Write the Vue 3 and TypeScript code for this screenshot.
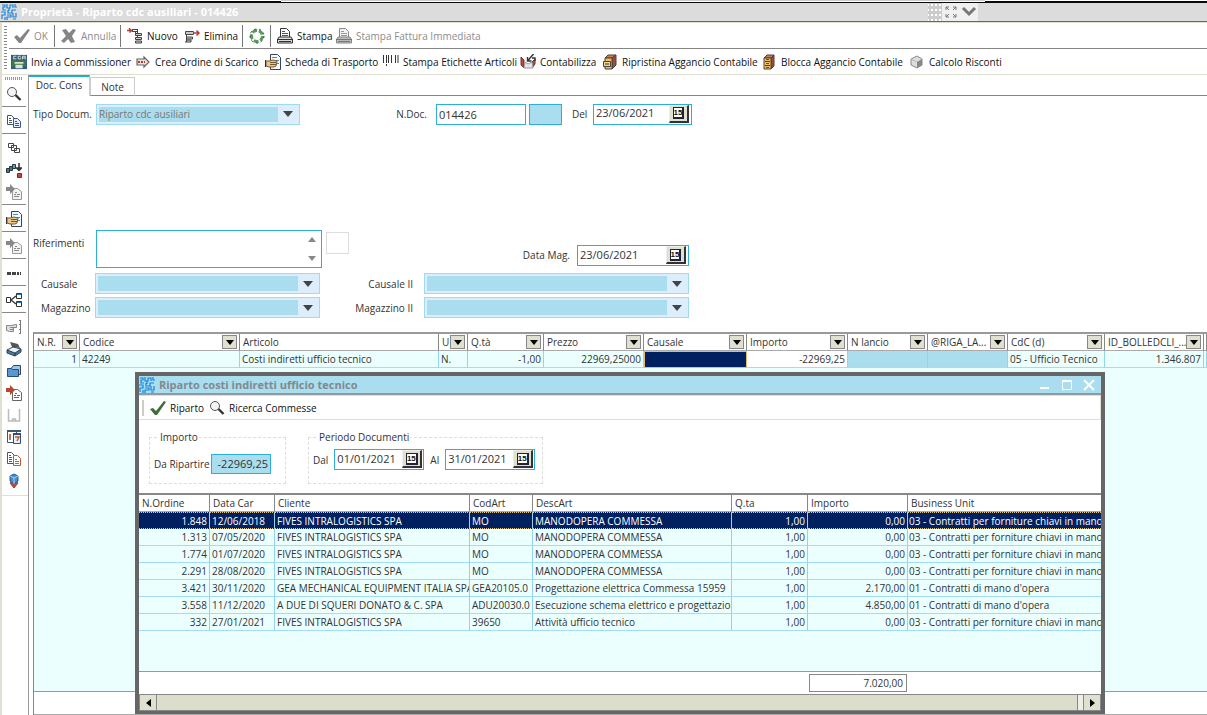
<script setup lang="ts">
import { ref } from 'vue'

interface Tool { icon: string; label: string; off?: boolean; sep?: boolean }

const fileTools: Tool[] = [
  { icon: 'check-off', label: 'OK', off: true },
  { icon: 'cross', label: 'Annulla', off: true, sep: true },
  { icon: 'new', label: 'Nuovo', sep: true },
  { icon: 'delete', label: 'Elimina' },
  { icon: 'recycle', label: '', sep: true },
  { icon: 'print', label: 'Stampa', sep: true },
  { icon: 'print-off', label: 'Stampa Fattura Immediata', off: true },
]

const docTools: Tool[] = [
  { icon: 'cga', label: 'Invia a Commissioner' },
  { icon: 'arrow', label: 'Crea Ordine di Scarico' },
  { icon: 'sheet-hand', label: 'Scheda di Trasporto' },
  { icon: 'barcode', label: 'Stampa Etichette Articoli' },
  { icon: 'book', label: 'Contabilizza' },
  { icon: 'cabinet', label: 'Ripristina Aggancio Contabile' },
  { icon: 'cabinet2', label: 'Blocca Aggancio Contabile' },
  { icon: 'cube', label: 'Calcolo Risconti' },
]

const rail: { icon: string; label: string; sep?: boolean }[] = [
  { icon: 'search', label: 'Cerca', sep: true },
  { icon: 'copy', label: 'Copia', sep: true },
  { icon: 'stack', label: 'Righe' },
  { icon: 'stack-down', label: 'Esplodi' },
  { icon: 'import-off', label: 'Importa', sep: true },
  { icon: 'sheet-hand', label: 'Scheda', sep: true },
  { icon: 'import-off', label: 'Importa righe', sep: true },
  { icon: 'dots', label: 'Altro', sep: true },
  { icon: 'tree', label: 'Struttura', sep: true },
  { icon: 'hand', label: 'Seleziona' },
  { icon: 'scanner', label: 'Scanner' },
  { icon: 'folder', label: 'Cartella' },
  { icon: 'import', label: 'Importa documento' },
  { icon: 'blank', label: 'Vuoto' },
  { icon: 'help', label: 'Guida' },
  { icon: 'copy-red', label: 'Duplica' },
  { icon: 'blocks', label: 'Moduli' },
]

const columns = ['N.R.', 'Codice', 'Articolo', 'U.', 'Q.tà', 'Prezzo', 'Causale', 'Importo', 'N lancio', '@RIGA_LA...', 'CdC (d)', 'ID_BOLLEDCLI_...']
const noFilter = 'Articolo'

const orderColumns = ['N.Ordine', 'Data Car', 'Cliente', 'CodArt', 'DescArt', 'Q.ta', 'Importo', 'Business Unit']
const supply = '03 - Contratti per forniture chiavi in mano'
const labour = "01 - Contratti di mano d'opera"
const orders: string[][] = [
  ['1.848', '12/06/2018', 'FIVES INTRALOGISTICS SPA', 'MO', 'MANODOPERA COMMESSA', '1,00', '0,00', supply],
  ['1.313', '07/05/2020', 'FIVES INTRALOGISTICS SPA', 'MO', 'MANODOPERA COMMESSA', '1,00', '0,00', supply],
  ['1.774', '01/07/2020', 'FIVES INTRALOGISTICS SPA', 'MO', 'MANODOPERA COMMESSA', '1,00', '0,00', supply],
  ['2.291', '28/08/2020', 'FIVES INTRALOGISTICS SPA', 'MO', 'MANODOPERA COMMESSA', '1,00', '0,00', supply],
  ['3.421', '30/11/2020', 'GEA MECHANICAL EQUIPMENT ITALIA SPA', 'GEA20105.0', 'Progettazione elettrica Commessa 15959', '1,00', '2.170,00', labour],
  ['3.558', '11/12/2020', 'A DUE DI SQUERI DONATO & C. SPA', 'ADU20030.0', 'Esecuzione schema elettrico e progettazione', '1,00', '4.850,00', labour],
  ['332', '27/01/2021', 'FIVES INTRALOGISTICS SPA', '39650', 'Attività ufficio tecnico', '1,00', '0,00', supply],
]
const numeric = [0, 5, 6]

const selected = ref(0)
const docNumber = ref('014426')
const docDate = ref('23/06/2021')
const stockDate = ref('23/06/2021')
const fromDate = ref('01/01/2021')
const toDate = ref('31/01/2021')
const amount = ref('-22969,25')
const total = ref('7.020,00')
const notes = ref('')
</script>

<template>
  <svg class="sprite" aria-hidden="true">
    <symbol id="i-maze" viewBox="0 0 16 16"><path d="M1 1h3v2H2v3h3M6 0v4h3V1h3v3M14 0v3h2M0 8h4v3H1v4M7 6v3h4V6h4M6 11h4v2H6v3M12 9v4h3V9M4 13v3M12 15h3M8 4v3" fill="none" stroke="#1583e0" stroke-width="1.2" /></symbol>
    <symbol id="i-check-off" viewBox="0 0 16 16"><path d="M0 9l3-2 3 3L14 1l2 1L7 15H5z" fill="#858585" /></symbol>
    <symbol id="i-check" viewBox="0 0 16 16"><path d="M0 9l3-1 3 3L14 1l2 1L7 15H5z" fill="#3f6d36" /></symbol>
    <symbol id="i-cross" viewBox="0 0 16 16"><path d="M1 2l4-1 3 4 4-4 3 1-4 6 3 6-4 1-3-4-4 4-3-2 5-5z" fill="#858585" /></symbol>
    <symbol id="i-new" viewBox="0 0 16 16"><path d="M0 2.500h5M2.500 0v1l2 1.500-2 2" fill="none" stroke="#b0402e" stroke-width="1.400" /><path d="M5 1.500h6M5 3.500h6M5.500 1v3M10.500 1v10M10.500 7h-2v-3" fill="none" stroke="#444" /><path d="M8.500 5.500h6v2h-6zM8.500 9.500h6v2h-6zM8.500 13h6v2h-6z" fill="#ccc" stroke="#444" /></symbol>
    <symbol id="i-delete" viewBox="0 0 16 16"><path d="M1.500 3.500h8v3h-8z" fill="#ccc" stroke="#444" /><path d="M2.500 6v8M2.500 9h6v2h-6M1 14h6v-2H2" fill="#ccc" stroke="#444" /><path d="M9 5h6M12.500 2.500L15 5l-2.500 2.500" fill="none" stroke="#b0402e" stroke-width="1.500" /></symbol>
    <symbol id="i-recycle" viewBox="0 0 16 16"><circle cx="8" cy="8" r="5.500" fill="none" stroke="#5c9a58" stroke-width="3" stroke-dasharray="5 1.800" /><circle cx="8" cy="8" r="7" fill="none" stroke="#304758" stroke-dasharray="2 3" /></symbol>
    <symbol id="i-print" viewBox="0 0 16 16"><path d="M3.500 9V.5h6l3 3V9" fill="#fff" stroke="#333" /><path d="M5 3.500h3M5 5.500h6M5 7.500h6" stroke="#555" /><path d="M2 9h12l1.500 2.500v3.500H.5v-3.500z" fill="#ddd" stroke="#333" /><path d="M0 11.500h16M2 13.500h12" stroke="#333" /></symbol>
    <symbol id="i-print-off" viewBox="0 0 16 16"><path d="M3.500 9V.5h6l3 3V9" fill="#f2f2f2" stroke="#888" /><path d="M5 3.500h3M5 5.500h6M5 7.500h6" stroke="#999" /><path d="M2 9h12l1.500 2.500v3.500H.5v-3.500z" fill="#bbb" stroke="#888" /><path d="M0 11.500h16M2 13.500h12" stroke="#777" /></symbol>
    <symbol id="i-cga" viewBox="0 0 18 16"><path d="M0 0h18v16H0z" fill="#345a86" /><path d="M1 6h16v7H1z" fill="#3c7a44" /><path d="M6 1.500H3v3h3M11 1.500H8v3h3V3M13 5V1.500h3V5M13 3.500h3" fill="none" stroke="#dfe6e0" /><path d="M4 8h10v2H4zM5 11h8v4H5z" fill="#dde2dc" /></symbol>
    <symbol id="i-arrow" viewBox="0 0 16 16"><path d="M2 5h7V3l5 5-5 5v-2H2z" fill="#e4e4e4" stroke="#666" stroke-width="1.200" /><path d="M3 8h7" stroke="#b0402e" stroke-width="2" stroke-dasharray="2 1" /></symbol>
    <symbol id="i-sheet-hand" viewBox="0 0 16 16"><path d="M5.500.5h7l3 3v12h-10z" fill="#f5f9fb" stroke="#384450" /><path d="M7 3.500h5M10 6.500h4M11 9.500h3" stroke="#3d93c8" /><path d="M1 7h3l4-1 4 1-1 5-2 1H4l-3-1z" fill="#ecc58a" stroke="#765931" /><path d="M5 8.500h6M5 10.500h6" stroke="#765931" /><path d="M.5 6v7" stroke="#333" /></symbol>
    <symbol id="i-barcode" viewBox="0 0 16 16"><path d="M.5 1v8M3.500 1v8M5.500 1v8M8.500 1v8M12.500 1v8M15 1v8M3.500 10v2" stroke="#333" /></symbol>
    <symbol id="i-book" viewBox="0 0 16 16"><path d="M1 3l3 3v8l-3-3zM15 5l-3 3v6l3-4z" fill="#b34b38" stroke="#733" /><path d="M5 8l3 2 4-2 1 6H4z" fill="#e6e6e6" stroke="#999" /><path d="M13.500 0L7.500 7M7.500 3v4h4M12 4h3v3" fill="none" stroke="#333" stroke-width="1.400" /></symbol>
    <symbol id="i-cabinet" viewBox="0 0 16 16"><path d="M3 4l3-3h8l-4 3z" fill="#d87850" stroke="#444" /><path d="M10 4l4-3v10l-4 4z" fill="#a84830" stroke="#444" /><path d="M3 4h7v11H3z" fill="#f0bd62" stroke="#444" /><path d="M1.500 7.500h7v5h-7z" fill="#f7d48c" stroke="#444" /><path d="M3 10h4" stroke="#333" /></symbol>
    <symbol id="i-cabinet2" viewBox="0 0 16 16"><path d="M3 4l3-3h7l-3 3z" fill="#d87850" stroke="#444" /><path d="M10 4l3-3v11l-3 3z" fill="#a84830" stroke="#444" /><path d="M3 4h7v11H3z" fill="#f0bd62" stroke="#444" /><path d="M4 7.500h5M4 11.500h5" stroke="#444" /><path d="M5 5.500h3M5 9.500h3M5 13.500h3" stroke="#7a4b20" /></symbol>
    <symbol id="i-cube" viewBox="0 0 16 16"><path d="M2 5l6-3 5 3v6l-5 3-6-3z" fill="#ddd" stroke="#888" /><path d="M8 8l5-3v6l-5 3z" fill="#888" /><path d="M2 5l6 3" stroke="#bbb" /></symbol>
    <symbol id="i-search" viewBox="0 0 16 16"><circle cx="6" cy="6" r="4.500" fill="#f2f4f5" stroke="#555" /><path d="M9.500 9l5 5" stroke="#333" stroke-width="2.400" /></symbol>
    <symbol id="i-copy" viewBox="0 0 16 16"><path d="M1.500 2.500h4l3 3v6h-7z" fill="#fff" stroke="#405468" /><path d="M3 5.500h2M3 7.500h3M3 9.500h3" stroke="#555" /><path d="M7.500 5.500h4l3 3v6h-7z" fill="#e4eefc" stroke="#36589a" /><path d="M9 8.500h2M9 10.500h4M9 12.500h4" stroke="#36589a" /></symbol>
    <symbol id="i-copy-red" viewBox="0 0 16 16"><path d="M1.500 1.500h4l3 3v8h-7z" fill="#fff" stroke="#555" /><path d="M3 4.500h2M3 6.500h3M3 8.500h3M3 10.500h3" stroke="#555" /><path d="M7.500 4.500h4l3 3v7h-7z" fill="#fff" stroke="#bf5b2c" /><path d="M9 8.500h2M9 10.500h4M9 12.500h4" stroke="#bf5b2c" /></symbol>
    <symbol id="i-stack" viewBox="0 0 16 16"><path d="M2.500 3.500h5v4h-5zM5.500 5.500h5v5h-5zM8.500 8.500h5v4h-5z" fill="#fff" stroke="#444" /></symbol>
    <symbol id="i-stack-down" viewBox="0 0 16 16"><path d="M.5 6.500h3v4h-3zM3.500 4.500h3v4h-3z" fill="#2d84a5" stroke="#333" /><path d="M6.500 2.500h3v4h-3z" fill="#4fa9c8" stroke="#333" /><path d="M13 1v6M10.500 6L13 8.500 15.500 6z" fill="#333" stroke="#333" stroke-width="1.500" /><path d="M11.500 11.500h4v4h-4z" fill="#c14a33" stroke="#633" /></symbol>
    <symbol id="i-import-off" viewBox="0 0 16 16"><path d="M6.500 4.500h5l4 3v8h-9z" fill="#f3f3f3" stroke="#999" /><path d="M9 8.500h2M8 10.500h2M11 10.500h3M8 12.500h5" stroke="#888" /><path d="M0 3h4V0l5 5-5 5V7H0z" fill="#888" /></symbol>
    <symbol id="i-import" viewBox="0 0 16 16"><path d="M6.500 4.500h5l4 3v8h-9z" fill="#fff" stroke="#666" /><path d="M9 8.500h2M8 10.500h2M11 10.500h3M8 12.500h5" stroke="#666" /><path d="M0 3h4V0l5 5-5 5V7H0z" fill="#b8472f" /></symbol>
    <symbol id="i-dots" viewBox="0 0 16 16"><path d="M1 7h4v3H1zM6 7h4v3H6zM11 7h2v3h-2zM14 7h1v3h-1z" fill="#444" /></symbol>
    <symbol id="i-tree" viewBox="0 0 16 16"><path d="M.5 5.500h4v5h-4zM10.500 1.500h5v5h-5zM10.500 9.500h5v5h-5z" fill="#fff" stroke="#333" /><path d="M5 8l5-4M5 8l5 4" stroke="#333" stroke-width="1.400" /><path d="M11 2.500h4M11 10.500h4" stroke="#2878c0" /></symbol>
    <symbol id="i-hand" viewBox="0 0 16 16"><path d="M.5 6.500h4l6-1v3h-3v4h-4l-3-1z" fill="#ddd" stroke="#888" /><path d="M4 8.500h4M4 10.500h4" stroke="#888" /><path d="M14.500 1v14M13 1.500h2M13 5.500h2M13 10.500h2M13 14.500h2" stroke="#777" /></symbol>
    <symbol id="i-scanner" viewBox="0 0 16 16"><path d="M4 1l8 2 2 4-8-1z" fill="#555" /><path d="M1 9l6-3 8 2-6 5z" fill="#eef4fb" stroke="#345" /><path d="M1 9v3l8 3v-3zM9 15l6-4V8l-6 4z" fill="#467ba8" stroke="#345" /></symbol>
    <symbol id="i-folder" viewBox="0 0 16 16"><path d="M5.500 5l2-2.500h7v9h-9z" fill="#9cc6ea" stroke="#345" /><path d="M1.500 5.500h4l1 1h6v7h-11z" fill="#5b97cc" stroke="#234d78" /></symbol>
    <symbol id="i-blank" viewBox="0 0 16 16"><path d="M2.500 2v12h11V2M6.500 14v-2h3v2" fill="none" stroke="#bbb" stroke-width="1.500" /></symbol>
    <symbol id="i-help" viewBox="0 0 16 16"><path d="M1.500 1.500h9v12h-9z" fill="#fff" stroke="#456" /><path d="M1 2h14" stroke="#456" stroke-width="2" /><path d="M4 5v6" stroke="#b0402e" stroke-width="1.500" /><path d="M7.500 4.500h7v10h-7z" fill="#e8effa" stroke="#2a4f88" /><path d="M7 5h8" stroke="#2a4f88" stroke-width="2" /><path d="M9 8h4l-2 4" fill="none" stroke="#c05a32" stroke-width="1.500" /></symbol>
    <symbol id="i-blocks" viewBox="0 0 16 16"><path d="M8 8l4 2-4 5-4-5z" fill="#c04a38" stroke="#844" /><path d="M4 3l4-2 4 2v5l-4 3-4-3z" fill="#3f8fd0" stroke="#2a5c90" /><path d="M4 3l4 2 4-2M8 5v6" fill="none" stroke="#a8d4f5" /></symbol>
  </svg>

  <main class="window">
    <header class="top">
      <div class="edge"><i /><i /><i /></div>
      <div class="titlebar">
        <svg class="ico"><use href="#i-maze" /></svg>
        <h1>Proprietà - Riparto cdc ausiliari - 014426</h1>
      </div>
      <div class="session">
        <span class="session-grip" />
        <button type="button" aria-label="Espandi">
          <svg width="14" height="14" viewBox="0 0 14 14"><path d="M2 5V2h3M2 2l3 3M9 2h3v3M12 2L9 5M2 9v3h3M2 12l3-3M12 9v3H9M12 12L9 9" fill="none" stroke="#777" /></svg>
        </button>
        <button type="button" aria-label="Apri">
          <svg width="16" height="12" viewBox="0 0 16 12"><path d="M2 2l6 6 6-6" fill="none" stroke="#777" stroke-width="3" /></svg>
        </button>
      </div>
    </header>

    <div class="toolbars">
      <span class="grip" />
      <div class="bars">
        <nav class="bar file-bar" aria-label="Documento">
          <button v-for="t in fileTools" :key="t.icon" type="button" :disabled="t.off" :class="{ sep: t.sep }" :aria-label="t.label || 'Aggiorna'">
            <svg class="ico"><use :href="'#i-' + t.icon" /></svg><span>{{ t.label }}</span>
          </button>
        </nav>
        <nav class="bar doc-bar" aria-label="Azioni">
          <button v-for="t in docTools" :key="t.icon" type="button">
            <svg class="ico"><use :href="'#i-' + t.icon" /></svg><span>{{ t.label }}</span>
          </button>
        </nav>
      </div>
    </div>

    <div class="body">
      <aside class="side">
        <div class="rail">
          <span class="rail-grip" />
          <button v-for="r in rail" :key="r.label" type="button" :class="{ cut: r.sep }" :aria-label="r.label">
            <svg class="ico"><use :href="'#i-' + r.icon" /></svg>
          </button>
        </div>
      </aside>

      <section class="content">
        <div class="tabs" role="tablist">
          <button type="button" role="tab" class="tab on" aria-selected="true">Doc. Cons</button>
          <button type="button" role="tab" class="tab" aria-selected="false">Note</button>
        </div>

        <form class="form" @submit.prevent>
          <div class="line first">
            <label for="tipo">Tipo Docum.</label>
            <div class="combo"><select id="tipo" disabled><option>Riparto cdc ausiliari</option></select><svg viewBox="0 0 10 6"><path d="M0 0h10L5 6z" /></svg></div>
            <label for="ndoc" class="right">N.Doc.</label>
            <input id="ndoc" v-model="docNumber" class="box number" />
            <button type="button" class="swatch" aria-label="Dettaglio numero" />
            <label for="del" class="del">Del</label>
            <div class="date"><input id="del" v-model="docDate" /><button type="button" aria-label="Calendario"><span>15</span></button></div>
          </div>
          <div class="line refs">
            <label for="rif">Riferimenti</label>
            <div class="area">
              <textarea id="rif" v-model="notes" />
              <div class="spin"><svg viewBox="0 0 8 5"><path d="M0 5h8L4 0z" /></svg><svg viewBox="0 0 8 5"><path d="M0 0h8L4 5z" /></svg></div>
            </div>
            <button type="button" class="blank" aria-label="Dettaglio riferimenti" />
            <label for="dmag" class="right low">Data Mag.</label>
            <div class="date wide low"><input id="dmag" v-model="stockDate" /><button type="button" aria-label="Calendario"><span>15</span></button></div>
          </div>
          <div class="pairs">
            <label for="cau">Causale</label>
            <div class="combo"><select id="cau" disabled><option></option></select><svg viewBox="0 0 10 6"><path d="M0 0h10L5 6z" /></svg></div>
            <label for="cau2" class="right">Causale II</label>
            <div class="combo"><select id="cau2" disabled><option></option></select><svg viewBox="0 0 10 6"><path d="M0 0h10L5 6z" /></svg></div>
            <label for="mag">Magazzino</label>
            <div class="combo"><select id="mag" disabled><option></option></select><svg viewBox="0 0 10 6"><path d="M0 0h10L5 6z" /></svg></div>
            <label for="mag2" class="right">Magazzino II</label>
            <div class="combo"><select id="mag2" disabled><option></option></select><svg viewBox="0 0 10 6"><path d="M0 0h10L5 6z" /></svg></div>
          </div>
        </form>

        <div class="grid">
          <table class="rows">
            <colgroup><col v-for="n in 13" :key="n" :class="'m' + n" /></colgroup>
            <thead>
              <tr>
                <th v-for="c in columns" :key="c" scope="col">
                  <div class="head"><span>{{ c }}</span><button v-if="c !== noFilter" type="button" :aria-label="'Filtra ' + c"><svg viewBox="0 0 8 5"><path d="M0 0h8L4 5z" /></svg></button></div>
                </th>
                <th />
              </tr>
            </thead>
            <tbody>
              <tr>
                <td class="num">1</td><td>42249</td><td>Costi indiretti ufficio tecnico</td><td>N.</td>
                <td class="num">-1,00</td><td class="num">22969,25000</td><td class="active" />
                <td class="num plain">-22969,25</td><td class="locked" /><td class="locked" />
                <td>05 - Ufficio Tecnico</td><td class="num">1.346.807</td><td />
              </tr>
            </tbody>
          </table>
          <div class="grid-foot" />
        </div>
      </section>
    </div>

    <section class="dialog" role="dialog" aria-labelledby="dlg-title">
      <header class="dialog-title">
        <svg class="ico"><use href="#i-maze" /></svg>
        <h2 id="dlg-title">Riparto costi indiretti ufficio tecnico</h2>
        <button type="button" aria-label="Riduci"><svg viewBox="0 0 12 12"><path d="M1 9h9" /></svg></button>
        <button type="button" aria-label="Ingrandisci"><svg viewBox="0 0 12 12"><path d="M1.500 2.500h9v8h-9z" stroke-width="1" /><path d="M1 2h10" /></svg></button>
        <button type="button" aria-label="Chiudi"><svg viewBox="0 0 12 12"><path d="M1 1l10 10M11 1L1 11" /></svg></button>
      </header>
      <nav class="bar dialog-bar" aria-label="Riparto">
        <button type="button"><svg class="ico"><use href="#i-check" /></svg><span>Riparto</span></button>
        <button type="button"><svg class="ico"><use href="#i-search" /></svg><span>Ricerca Commesse</span></button>
      </nav>
      <div class="filters">
        <fieldset class="amount">
          <legend>Importo</legend>
          <label for="imp">Da Ripartire</label>
          <input id="imp" v-model="amount" class="amount-box" />
        </fieldset>
        <fieldset class="period">
          <legend>Periodo Documenti</legend>
          <label for="dal">Dal</label>
          <div class="date small"><input id="dal" v-model="fromDate" /><button type="button" aria-label="Calendario"><span>15</span></button></div>
          <label for="al">Al</label>
          <div class="date small"><input id="al" v-model="toDate" /><button type="button" aria-label="Calendario"><span>15</span></button></div>
        </fieldset>
      </div>
      <div class="orders">
        <table class="rows">
          <colgroup><col v-for="n in 8" :key="n" :class="'d' + n" /></colgroup>
          <thead>
            <tr><th v-for="c in orderColumns" :key="c" scope="col"><div class="head"><span>{{ c }}</span></div></th></tr>
          </thead>
          <tbody>
            <tr v-for="(o, i) in orders" :key="i" :class="{ picked: i === selected }" @click="selected = i">
              <td v-for="(v, k) in o" :key="k" :class="{ num: numeric.includes(k) }">{{ v }}</td>
            </tr>
          </tbody>
        </table>
      </div>
      <div class="total"><output>{{ total }}</output></div>
      <div class="scroll">
        <button type="button" aria-label="Scorri a sinistra"><svg viewBox="0 0 5 8"><path d="M5 0v8L0 4z" /></svg></button>
        <span class="thumb" />
        <button type="button" aria-label="Scorri a destra"><svg viewBox="0 0 5 8"><path d="M0 0v8l5-4z" /></svg></button>
      </div>
    </section>
  </main>
</template>

<style>
body { background: #fff; }
</style>

<style scoped>
* { box-sizing: border-box; }
.window { position: relative; display: flex; flex-direction: column; min-height: 100vh; overflow: hidden; background: #fff; color: #333; font: 10px/14px "Open Sans", "Noto Sans", sans-serif; }
.sprite { position: absolute; width: 0; height: 0; }
button, input, select, textarea { margin: 0; padding: 0; border: 0; background: none; color: inherit; font: inherit; border-radius: 0; outline: 0; }
.ico { display: block; width: 16px; height: 16px; flex: none; }

.top { position: relative; }
.edge { display: grid; grid-template-columns: 281px 704px 1fr; height: 3px; }
.edge i { border-bottom: 2px solid #0a0a0a; }
.edge i:nth-child(2) { border-top: 1px solid #ccc; border-bottom-width: 1px; }
.titlebar { display: flex; align-items: center; gap: 4px; height: 19px; padding: 0 1px; background: #dcdcdc; border-bottom: 1px solid #666; }
h1, h2 { margin: 0; font-size: 11px; line-height: 16px; font-weight: 700; white-space: nowrap; }
h1 { color: #fff; }
.session { position: absolute; top: 3px; left: 928px; display: flex; align-items: center; height: 18px; background: #f0f0f0; }
.session-grip { width: 14px; height: 18px; background: conic-gradient(#fff 25%, #ccc 0) 1px 1px / 4px 5px; }
.session button { display: flex; align-items: center; justify-content: center; width: 18px; }

.toolbars { display: flex; border-top: 1px solid #dfe0cf; border-bottom: 1px solid #dfe0cf; border-left: 2px solid #dfe0cf; }
.grip { width: 3px; margin: 3px 2px; background: repeating-linear-gradient(#888 0 1px, #fff 1px 3px); }
.bars { flex: 1; min-width: 0; }
.bar { display: grid; align-items: center; height: 26px; }
.bar button { display: flex; align-items: center; gap: 4px; height: 22px; white-space: nowrap; color: #111; }
.bar button:disabled { color: #8c8c8c; }
.file-bar { grid-template-columns: 40px 66px 64px 58px 28px 66px auto; justify-content: start; padding-left: 5px; border-bottom: 1px solid #858585; }
.bar .sep { border-left: 1px solid #777; padding-left: 6px; }
.doc-bar { height: 25px; grid-template-columns: 124px 130px 118px 137px 82px 159px 148px auto; justify-content: start; padding-left: 2px; }

.body { flex: 1; display: flex; }
.side { width: 29px; border-right: 1px solid #999; border-left: 2px solid #dfe0cf; }
.rail { display: flex; flex-direction: column; align-items: center; padding: 2px 2px 3px 0; border-bottom: 1px solid #dfe0cf; }
.rail-grip { width: 18px; height: 3px; margin-bottom: 3px; background: repeating-linear-gradient(90deg, #999 0 1px, #fff 1px 2px); }
.rail button { display: flex; justify-content: center; align-items: center; width: 100%; height: 22px; }
.rail .cut { height: 24px; padding-bottom: 1px; margin-bottom: 3px; border-bottom: 1px solid #888; }

.content { flex: 1; min-width: 0; display: flex; flex-direction: column; }
.tabs { display: flex; align-items: flex-end; height: 21px; }
.tabs::after { content: ""; flex: 1; border-bottom: 1px solid #1aabdc; }
.tab { width: 45px; height: 19px; border: 1px solid #ccc; border-bottom-color: #1aabdc; }
.tab.on { width: 61px; height: 21px; padding-bottom: 3px; border: 0; border-top: 2px solid #1aabdc; border-right: 1px solid #ccc; }

.form { padding: 6px 0 14px 4px; }
.line { display: flex; align-items: center; }
.line label { flex: none; width: 63px; white-space: nowrap; }
.combo { display: flex; align-items: center; height: 21px; padding: 2px; border: 1px solid #9edaf2; background: #dceefc; }
.combo select { flex: 1; min-width: 0; height: 15px; background: #aaddee; appearance: none; color: #777; opacity: 1; }
.combo svg { width: 10px; height: 6px; margin: 0 4px 0 5px; fill: #444; }
.first { height: 24px; }
.first .combo { width: 204px; }
.line .right { width: 136px; padding-right: 9px; text-align: right; }
.line .del { width: 31px; padding-left: 10px; }
.box { height: 21px; border: 1px solid #2badde; padding: 0 2px; font-size: 11px; background: #fff; }
.number { width: 90px; }
.swatch { width: 33px; height: 21px; margin-left: 3px; border: 1px solid #2badde; background: #aaddee; }
.date { display: flex; width: 99px; height: 21px; border: 1px solid #2badde; background: #fff; }
.date input { flex: 1; min-width: 0; padding: 0 0 2px 2px; font-size: 11px; }
.date button { display: flex; align-items: center; justify-content: center; width: 20px; height: 18px; margin-right: 2px; background: #dfe0d0; border: 1px solid #eee; border-right: 2px solid #333; border-bottom: 2px solid #333; }
.date button span { padding: 1px 0; border: solid #223; border-width: 1px 2px 2px 1px; background: #fff; font: 700 8px/7px "Liberation Sans", sans-serif; color: #111; }
.date.wide { width: 112px; }
.date.small { width: 90px; }
.date.small button { margin-right: 1px; }
.refs { align-items: flex-start; margin-top: 104px; }
.refs > label { padding-top: 6px; }
.area { display: flex; width: 226px; height: 38px; border: 1px solid #2badde; }
.area textarea { flex: 1; min-width: 0; resize: none; }
.spin { display: flex; flex-direction: column; justify-content: space-between; width: 17px; padding: 6px 4px; }
.spin svg { width: 8px; height: 5px; fill: #888; }
.blank { width: 23px; height: 22px; margin: 2px 0 0 4px; border: 1px solid #ddd; }
.line .right.low { width: 228px; padding-top: 18px; padding-right: 7px; }
.date.low { margin-top: 15px; }
.pairs { display: grid; grid-template-columns: 62px 225px 104px 265px; gap: 3px 0; align-items: center; margin-top: 5px; }
.pairs label { padding-left: 8px; }
.pairs .right { padding: 0 11px 0 0; text-align: right; }

.grid { flex: 1; display: flex; flex-direction: column; margin-left: 4px; border-left: 1px solid #888; border-top: 2px solid #999; background: #ebffff; }
.grid-foot { height: 24px; margin-top: auto; background: #fff; border-top: 1px solid #999; border-bottom: 1px solid #aaa; }
.rows { width: 100%; table-layout: fixed; border-collapse: separate; border-spacing: 0; }
.rows th { padding: 0; background: #fff; border-right: 1px solid #888; border-bottom: 1px solid #aaa; font-weight: 400; text-align: left; }
.rows td { height: 17px; padding: 0 3px 0 2px; overflow: hidden; white-space: nowrap; border-right: 1px solid #92d4ee; border-bottom: 1px solid #a4dcf5; line-height: 15px; }
.rows .num { padding-right: 2px; text-align: right; }
.head { display: flex; align-items: center; height: 16px; padding: 0 2px 0 3px; }
.head span { flex: 1; min-width: 0; white-space: nowrap; }
.head button { display: flex; flex: none; align-items: center; justify-content: center; width: 15px; height: 14px; border: 1px solid #888; background: #dfe0cf; }
.head svg { width: 8px; height: 5px; fill: #000; }
.rows .active { background: #002060; border: 1px solid #e8b878; }
.rows .plain { background: #fff; }
.rows .locked { background: #aaddee; }
.m1 { width: 46px; } .m2 { width: 160px; } .m3 { width: 199px; } .m4 { width: 29px; } .m5 { width: 76px; } .m6 { width: 100px; }
.m7 { width: 103px; } .m8 { width: 101px; } .m9, .m10 { width: 80px; } .m11 { width: 97px; } .m12 { width: 99px; }

.dialog { position: absolute; top: 372px; left: 135px; right: 102px; display: flex; flex-direction: column; border: 4px solid #666; border-bottom-width: 3px; background: #fff; }
.dialog-title { display: flex; align-items: center; height: 19px; padding-right: 1px; background: #aaddee; border-bottom: 2px solid #909aa0; }
.dialog-title h2 { flex: 1; padding-left: 4px; color: #818990; }
.dialog-title button { display: flex; justify-content: center; width: 22px; }
.dialog-title button svg { width: 12px; height: 12px; fill: none; stroke: #fff; stroke-width: 2; }
.dialog-bar { height: 25px; grid-template-columns: 59px auto; justify-content: start; padding-left: 11px; border: 1px solid #dfe0cf; border-left: 0; background: linear-gradient(#ccccc0, #ccccc0) 3px 4px / 2px 16px no-repeat; }
.filters { display: flex; gap: 22px; padding: 10px 10px 9px; }
fieldset { display: flex; align-items: center; min-width: 0; height: 54px; margin: 0; padding: 0 0 0 4px; border: 1px dashed #ddd; }
legend { margin-left: 5px; padding: 0 1px; line-height: 14px; }
.amount { width: 137px; }
.amount-box { width: 60px; height: 20px; margin-left: auto; margin-right: 14px; padding-right: 2px; border: 1px solid #2badde; background: #aaddee; font-size: 11px; text-align: right; }
.period { width: 235px; gap: 6px; padding-bottom: 8px; }
.orders { height: 179px; border-top: 2px solid #888; border-bottom: 1px solid #999; background: #ebffff; }
.orders td:last-child, .orders th:last-child { border-right: 0; padding-right: 0; }
.orders td:last-child { padding-left: 1px; }
.rows .picked td { background: #002060; color: #fff; border-top: 1px dotted #e0c890; border-bottom: 1px dotted #e0c890; line-height: 14px; }
.d1 { width: 71px; } .d2 { width: 65px; } .d3 { width: 195px; } .d4 { width: 63px; } .d5 { width: 199px; } .d6 { width: 76px; } .d7 { width: 100px; }
.total { display: flex; height: 22px; padding: 2px 194px 2px 0; justify-content: flex-end; }
.total output { width: 98px; padding-right: 3px; border: 1px solid #888; text-align: right; line-height: 16px; }
.scroll { display: flex; height: 17px; border: 1px solid #888; background: #eeeee6; }
.scroll button { display: flex; align-items: center; justify-content: center; width: 17px; background: #dfe0cf; border-right: 1px solid #888; }
.scroll button:last-child { border-right: 0; border-left: 1px solid #888; }
.scroll svg { width: 5px; height: 8px; }
.thumb { flex: 1; margin-right: 5px; border-right: 1px solid #888; background: #dcddcb; }
</style>
